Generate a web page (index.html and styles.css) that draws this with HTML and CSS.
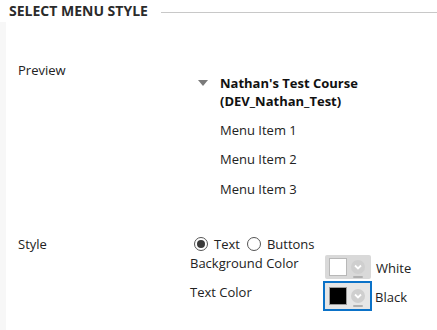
FILE: index.html
```html
<!DOCTYPE html>
<html>
<head>
<meta charset="utf-8">
<link rel="stylesheet" href="styles.css">
</head>
<body>
<div class="page">
  <div class="heading">
    <h2 class="title">SELECT MENU STYLE</h2>
    <div class="rule"></div>
  </div>
  <div class="content">
    <div class="row preview-row">
      <div class="label">Preview</div>
      <div class="value">
        <div class="tree">
          <div class="course">
            <span class="caret"></span>
            <span class="course-name">Nathan's Test Course<br>(DEV_Nathan_Test)</span>
          </div>
          <ul class="items">
            <li>Menu Item 1</li>
            <li>Menu Item 2</li>
            <li>Menu Item 3</li>
          </ul>
        </div>
      </div>
    </div>
    <div class="row style-row">
      <div class="label">Style</div>
      <div class="value">
        <div class="radios">
          <label class="radio"><input type="radio" name="s" checked>Text</label>
          <label class="radio"><input type="radio" name="s">Buttons</label>
        </div>
        <div class="color-row bg">
          <span class="color-label">Background Color</span>
          <span class="picker">
            <span class="swatch white"></span>
            <span class="knob"><svg width="14" height="14" viewBox="0 0 14 14"><circle cx="7" cy="7" r="7" fill="#cfcfcf"/><path d="M4 5.5 L7 8.5 L10 5.5" fill="none" stroke="#fff" stroke-width="1.8"/></svg></span>
          </span>
          <span class="color-name">White</span>
        </div>
        <div class="color-row tc">
          <span class="color-label">Text Color</span>
          <span class="picker focused">
            <span class="swatch black"></span>
            <span class="knob"><svg width="14" height="14" viewBox="0 0 14 14"><circle cx="7" cy="7" r="7" fill="#cfcfcf"/><path d="M4 5.5 L7 8.5 L10 5.5" fill="none" stroke="#fff" stroke-width="1.8"/></svg></span>
          </span>
          <span class="color-name">Black</span>
        </div>
      </div>
    </div>
  </div>
</div>
</body>
</html>
```
FILE: styles.css
```css
html, body {
  margin: 0;
  padding: 0;
  background: #ffffff;
}
body {
  font-family: "Open Sans", "Liberation Sans", sans-serif;
  font-size: 13px;
  color: #222;
}
.page {
  width: 437px;
  height: 330px;
  overflow: hidden;
  background: #f7f7f7;
}
.heading {
  display: flex;
  align-items: center;
  background: #fff;
  height: 22px;
  padding-left: 9px;
}
.title {
  margin: 0;
  font-size: 14px;
  font-weight: 700;
  color: #2b2b2b;
  line-height: 22px;
  white-space: nowrap;
}
.rule {
  flex: 1;
  height: 1px;
  background: #c8c8c8;
  margin-left: 13px;
  margin-top: 2px;
}
.content {
  background: #fff;
  margin-left: 6px;
  height: 308px;
  padding-left: 12px;
}
.row {
  display: grid;
  grid-template-columns: 172px 1fr;
}
.label {
  line-height: 18px;
}
.preview-row {
  padding-top: 39px;
}
.tree {
  padding-left: 8px;
  padding-top: 13px;
}
.course {
  display: flex;
  align-items: flex-start;
}
.caret {
  width: 0;
  height: 0;
  border-left: 5px solid transparent;
  border-right: 5px solid transparent;
  border-top: 6px solid #7a7a7a;
  margin-top: 6px;
  margin-right: 12px;
}
.course-name {
  font-weight: 700;
  line-height: 18px;
  color: #111;
}
.items {
  list-style: none;
  margin: 0;
  padding: 0 0 0 22px;
}
.items li {
  line-height: 18px;
  margin-top: 11px;
}
.items li:last-child {
  margin-top: 12px;
}
.style-row {
  padding-top: 36px;
}
.radios {
  display: flex;
  align-items: center;
  height: 18px;
  margin-top: 1px;
}
.radio {
  display: inline-flex;
  align-items: center;
  margin-right: 3px;
}
.radio input {
  -webkit-appearance: none;
  appearance: none;
  margin: 0 6px 0 4px;
  width: 14px;
  height: 14px;
  border: 1px solid #555;
  border-radius: 50%;
  box-sizing: border-box;
  background: #fff;
  display: inline-flex;
  align-items: center;
  justify-content: center;
}
.radio input:checked::after {
  content: "";
  width: 8px;
  height: 8px;
  border-radius: 50%;
  background: #3a3a3a;
}
.style-row .label {
  margin-top: 1px;
}
.color-row {
  display: flex;
  align-items: center;
}
.color-label {
  width: 135px;
  line-height: 18px;
}
.color-row.bg .color-label { margin-top: -8px; }
.color-row.tc .color-label { margin-top: -8px; }
.picker {
  display: inline-flex;
  align-items: center;
  gap: 4px;
  box-sizing: border-box;
  background: #d9d9d9;
  border-radius: 2px;
}
.bg .picker {
  width: 46px;
  height: 24px;
  padding-left: 4px;
}
.tc .picker {
  width: 49px;
  height: 30px;
  padding-left: 4px;
  margin-left: -2px;
  border: 2px solid #0b72c8;
  border-radius: 0;
  background: #e6e6e6;
}
.swatch {
  width: 16px;
  height: 16px;
  border: 1px solid #b8b8b8;
  box-sizing: content-box;
}
.swatch.white { background: #fff; }
.swatch.black { background: #000; border-color: #9a9a9a; }
.knob {
  display: inline-flex;
  position: relative;
}
.knob::after {
  content: "";
  position: absolute;
  left: 2px;
  right: 2px;
  bottom: -4px;
  height: 2px;
  border-radius: 1px;
  background: #b0b0b0;
}
.color-name {
  margin-left: 5px;
  line-height: 18px;
}
.bg { height: 26px; margin-top: 1px; }
.tc { height: 32px; margin-top: 0; }
.tc .color-name { margin-left: 3px; margin-top: 2px; }
.bg .color-name { margin-top: 2px; }
```
